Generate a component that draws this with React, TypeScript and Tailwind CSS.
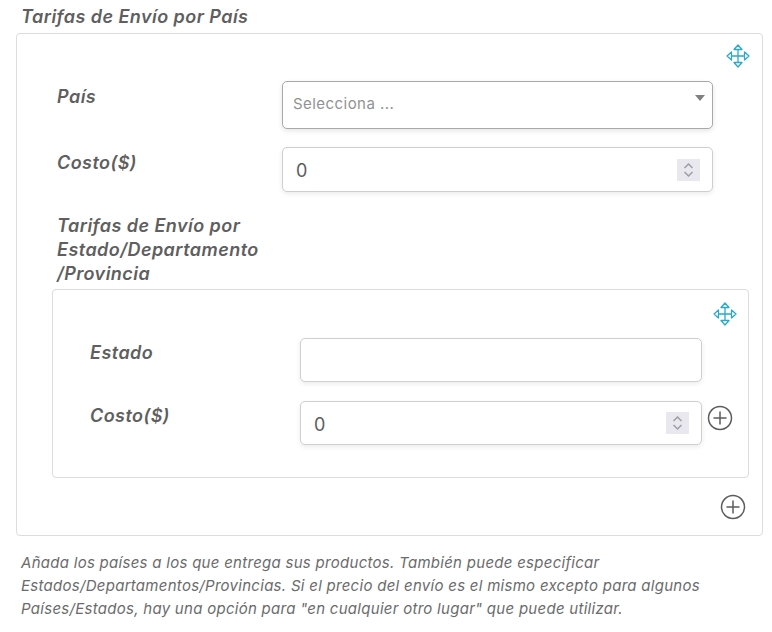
const labelCls = "text-[18px] font-semibold italic tracking-[0.45px] text-[#5f5f5f] leading-[24px]";

function MoveIcon() {
  return (
    <svg width="24" height="24" viewBox="0 0 24 24" fill="none" stroke="#2aa9c9" strokeWidth="1.300" strokeLinejoin="round">
      <path d="M12 5.500V18.500M5.500 12H18.500" />
      <path d="M12 1L16 5.500H8Z" />
      <path d="M12 23L16 18.500H8Z" />
      <path d="M1 12L5.500 8V16Z" />
      <path d="M23 12L18.500 8V16Z" />
    </svg>
  );
}

function PlusIcon() {
  return (
    <svg width="26" height="26" viewBox="0 0 26 26" fill="none" stroke="#5c5c5c" strokeWidth="1.500">
      <circle cx="13" cy="13" r="11.500" />
      <path d="M13 6.500V19.500M6.500 13H19.500" />
    </svg>
  );
}

function Spinner() {
  return (
    <div className="flex h-[22px] w-[23px] flex-col items-center justify-center bg-[#e8e8ee]">
      <svg width="13" height="18" viewBox="0 0 13 18" fill="none" stroke="#9d9da8" strokeWidth="1.500">
        <path d="M2.500 7L6.500 3L10.500 7" />
        <path d="M2.500 11L6.500 15L10.500 11" />
      </svg>
    </div>
  );
}

function NumberField() {
  return (
    <div className="flex h-full w-full items-center justify-between rounded-[5px] border border-[#cfcfcf] bg-white pl-[13px] pr-[12px] shadow-[0_2px_5px_rgba(0,0,0,0.08)]">
      <span className="pt-[2px] text-[18px] text-[#5c5c5c]">0</span>
      <Spinner />
    </div>
  );
}

export default function App() {
  return (
    <div className="h-[632px] w-[772px] overflow-hidden bg-white pl-4 pr-[9px] pt-[5px] font-['Inter','Open_Sans',sans-serif]">
      <h3 className={`pl-[5px] ${labelCls}`}>Tarifas de Envío por País</h3>

      <div className="mt-1 h-[503px] rounded-[4px] border border-[#dcdcdc] px-[35px] pt-[10px]">
        <div className="flex justify-end">
          <div className="-mr-[23px]"><MoveIcon /></div>
        </div>

        <div className="mt-[13px] flex">
          <div className={`w-[230px] shrink-0 pl-[5px] pt-[4px] ${labelCls}`}>País</div>
          <div className="flex h-12 w-[431px] shrink-0 items-start justify-between rounded-[5px] border border-[#a9a9a9] bg-white pl-[10px] pr-[7px] pt-[10px] shadow-[0_2px_5px_rgba(0,0,0,0.1)]">
            <span className="text-[15px] leading-[24px] tracking-[0.45px] text-[#929292]">Selecciona ...</span>
            <span className="mt-[3px] h-0 w-0 border-x-[5px] border-t-[6px] border-x-transparent border-t-[#808080]" />
          </div>
        </div>

        <div className="mt-[18px] flex">
          <div className={`w-[230px] shrink-0 pl-[5px] pt-[4px] ${labelCls}`}>Costo($)</div>
          <div className="h-[45px] w-[431px] shrink-0"><NumberField /></div>
        </div>

        <div className={`mt-[22px] w-[230px] pl-[5px] ${labelCls}`}>
          Tarifas de Envío por Estado/Departamento /Provincia
        </div>

        <div className="mt-[3px] h-[189px] w-[697px] rounded-[4px] border border-[#dcdcdc] px-[37px] pt-[12px]">
          <div className="flex justify-end">
            <div className="-mr-[26px]"><MoveIcon /></div>
          </div>
          <div className="mt-[12px] flex">
            <div className={`w-[210px] shrink-0 pt-[3px] ${labelCls}`}>Estado</div>
            <div className="h-[44px] w-[402px] shrink-0 rounded-[5px] border border-[#cfcfcf] bg-white shadow-[0_2px_5px_rgba(0,0,0,0.08)]" />
          </div>
          <div className="mt-[19px] flex">
            <div className={`w-[210px] shrink-0 pt-[3px] ${labelCls}`}>Costo($)</div>
            <div className="h-[44px] w-[402px] shrink-0"><NumberField /></div>
            <div className="ml-[5px] mt-[4px] shrink-0"><PlusIcon /></div>
          </div>
        </div>

        <div className="mt-[16px] flex justify-end">
          <div className="-mr-[19px]"><PlusIcon /></div>
        </div>
      </div>

      <p className="mt-[15px] whitespace-nowrap pl-[5px] text-[15px] italic leading-[23px] tracking-[0.28px] text-[#6b6b6b]">
        Añada los países a los que entrega sus productos. También puede especificar<br />
        Estados/Departamentos/Provincias. Si el precio del envío es el mismo excepto para algunos<br />
        Países/Estados, hay una opción para "en cualquier otro lugar" que puede utilizar.
      </p>
    </div>
  );
}
